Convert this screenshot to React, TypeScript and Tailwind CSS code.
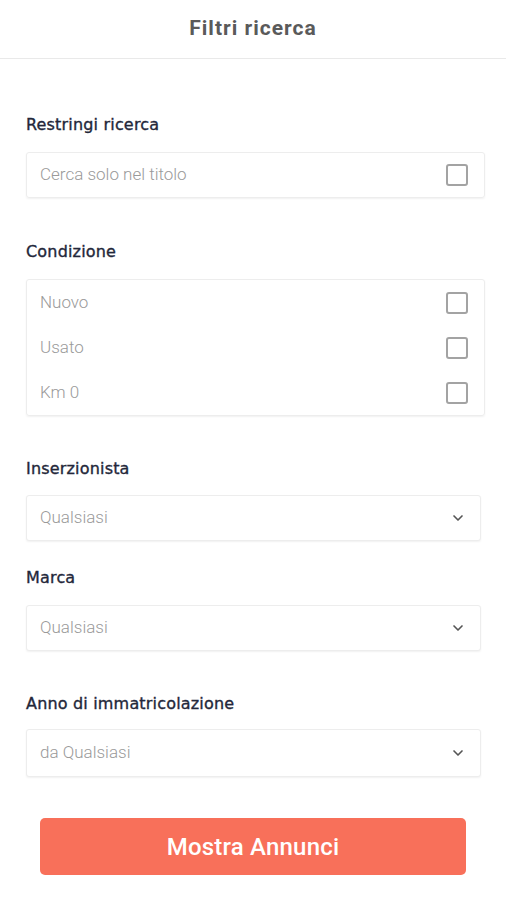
import { ChevronDown } from "lucide-react";

const font = { fontFamily: "Roboto, 'Noto Sans', sans-serif" };

const Checkbox = () => (
  <span className="block w-[22px] h-[22px] rounded-[3px] border-2 border-[#a3a3a3]" />
);

const Label = ({ children, className = "" }: { children: string; className?: string }) => (
  <div
    className={`text-[16px] leading-5 font-normal tracking-[0.18px] text-[#23273a] [-webkit-text-stroke:0.35px_#23273a] ${className}`}
    style={{ fontFamily: "'DejaVu Sans', Verdana, sans-serif" }}
  >
    {children}
  </div>
);

const SelectBox = ({ value, className = "" }: { value: string; className?: string }) => (
  <div
    className={`mr-[4px] flex items-center justify-between rounded-[3px] border border-[#ededed] bg-white pl-[13px] pr-[14px] shadow-[0_1px_2px_rgba(0,0,0,0.06)] ${className}`}
  >
    <span className="text-[17px] font-light text-[#9a9a9a]">{value}</span>
    <ChevronDown className="w-[16px] h-[16px] text-[#555]" strokeWidth={2.5} />
  </div>
);

export default function App() {
  return (
    <div className="w-[506px] h-[900px] bg-white" style={font}>
      <div className="h-[59px] flex items-center justify-center border-b border-[#e9e9e9]">
        <h1 className="text-[21px] font-bold text-[#5a5a5a] tracking-[1px]">Filtri ricerca</h1>
      </div>

      <div className="pl-[26px] pr-[21px]">
        <Label className="mt-[56px]">Restringi ricerca</Label>
        <div className="mt-[17px] h-[46px] flex items-center justify-between rounded-[3px] border border-[#ededed] pl-[13px] pr-[16px] shadow-[0_1px_2px_rgba(0,0,0,0.06)]">
          <span className="text-[17px] font-light text-[#9a9a9a]">Cerca solo nel titolo</span>
          <Checkbox />
        </div>

        <Label className="mt-[44px]">Condizione</Label>
        <div className="mt-[17px] rounded-[3px] border border-[#ededed] shadow-[0_1px_2px_rgba(0,0,0,0.06)]">
          {["Nuovo", "Usato", "Km 0"].map((item) => (
            <div key={item} className="h-[45px] flex items-center justify-between pl-[13px] pr-[16px]">
              <span className="text-[17px] font-light text-[#9a9a9a]">{item}</span>
              <Checkbox />
            </div>
          ))}
        </div>

        <Label className="mt-[43px]">Inserzionista</Label>
        <SelectBox value="Qualsiasi" className="mt-[16px] h-[46px]" />

        <Label className="mt-[27px]">Marca</Label>
        <SelectBox value="Qualsiasi" className="mt-[17px] h-[46px]" />

        <Label className="mt-[43px]">Anno di immatricolazione</Label>
        <SelectBox value="da Qualsiasi" className="mt-[15px] h-[48px]" />
      </div>

      <div className="px-[40px] mt-[41px]">
        <button className="w-full h-[57px] rounded-[5px] bg-[#f8705a] text-white text-[24px] font-medium tracking-[0.2px]">
          Mostra Annunci
        </button>
      </div>
    </div>
  );
}
